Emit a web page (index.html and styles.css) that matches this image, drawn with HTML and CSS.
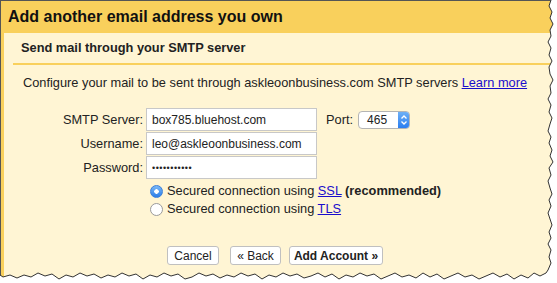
FILE: index.html
```html
<!DOCTYPE html>
<html lang="en">
<head>
    <meta charset="UTF-8">
    <meta name="viewport" content="width=device-width, initial-scale=1.0">
    <title>Add another email address you own</title>
    <link rel="stylesheet" href="styles.css">
</head>
<body>
    <div class="page">
        <div class="dialog">
            <div class="header">Add another email address you own</div>
            <div class="content">
                <div class="section-title">Send mail through your SMTP server</div>
                <div class="divider"></div>
                <p class="intro">Configure your mail to be sent through askleoonbusiness.com SMTP servers <a href="#">Learn more</a></p>

                <div class="form">
                    <label class="label">SMTP Server:</label>
                    <div class="field-row">
                        <input class="text" type="text" value="box785.bluehost.com">
                        <span class="port-label">Port:</span>
                        <div class="select">
                            <span class="select-value">465</span>
                            <span class="select-arrows">
                                <svg width="8" height="12" viewBox="0 0 8 12">
                                    <path d="M1.5 4.5 L4 2 L6.5 4.5 M1.5 7.5 L4 10 L6.5 7.5" fill="none" stroke="#fff" stroke-width="1.3"/>
                                </svg>
                            </span>
                        </div>
                    </div>
                    <label class="label">Username:</label>
                    <div class="field-row">
                        <input class="text" type="text" value="leo@askleoonbusiness.com">
                    </div>
                    <label class="label">Password:</label>
                    <div class="field-row">
                        <input class="text password" type="password" value="leopassword">
                    </div>
                </div>

                <div class="options">
                    <div class="option">
                        <span class="radio checked"></span>
                        <span>Secured connection using <a href="#">SSL</a> <b>(recommended)</b></span>
                    </div>
                    <div class="option">
                        <span class="radio"></span>
                        <span>Secured connection using <a href="#">TLS</a></span>
                    </div>
                </div>

                <div class="buttons">
                    <button class="btn cancel">Cancel</button>
                    <button class="btn back">&laquo; Back</button>
                    <button class="btn primary">Add Account &raquo;</button>
                </div>
            </div>
        </div>

        <svg class="torn" width="557" height="283" viewBox="0 0 557 283">
            <path class="torn-fill" d="M557 0 L551 0 L549 6 L552 12 L550 18 L553 24 L550 30 L551 36 L548 42 L551 48 L549 55 L552 61 L549 67 L550 74 L553 80 L550 86 L551 93 L548 99 L551 105 L549 112 L552 118 L550 124 L548 131 L551 137 L549 143 L552 150 L550 156 L553 162 L549 168 L551 175 L548 181 L550 188 L552 194 L549 200 L551 206 L548 213 L550 219 L552 225 L549 232 L551 238 L548 244 L551 250 L549 257 L551 263 L548 270 L546 273 L540 276 L534 273 L528 278 L521 275 L514 279 L507 274 L500 277 L493 273 L486 276 L479 279 L472 275 L465 277 L458 273 L451 276 L444 279 L437 274 L430 277 L423 273 L416 278 L409 275 L402 277 L395 273 L388 276 L381 279 L374 274 L367 276 L360 273 L353 277 L346 275 L339 279 L332 274 L325 277 L318 273 L311 276 L304 278 L297 274 L290 276 L283 273 L276 277 L269 275 L262 279 L255 274 L248 276 L241 273 L234 277 L227 275 L220 278 L213 274 L206 276 L199 273 L192 277 L185 279 L178 274 L171 276 L164 273 L157 277 L150 275 L143 279 L136 274 L129 276 L122 273 L115 277 L108 275 L101 278 L94 274 L87 276 L80 273 L73 277 L66 275 L59 279 L52 274 L45 276 L38 273 L31 277 L24 275 L17 278 L10 275 L3 277 L0 275 L0 283 L557 283 Z"/>
            <path class="torn-line" d="M551 0 L549 6 L552 12 L550 18 L553 24 L550 30 L551 36 L548 42 L551 48 L549 55 L552 61 L549 67 L550 74 L553 80 L550 86 L551 93 L548 99 L551 105 L549 112 L552 118 L550 124 L548 131 L551 137 L549 143 L552 150 L550 156 L553 162 L549 168 L551 175 L548 181 L550 188 L552 194 L549 200 L551 206 L548 213 L550 219 L552 225 L549 232 L551 238 L548 244 L551 250 L549 257 L551 263 L548 270 L546 273 L540 276 L534 273 L528 278 L521 275 L514 279 L507 274 L500 277 L493 273 L486 276 L479 279 L472 275 L465 277 L458 273 L451 276 L444 279 L437 274 L430 277 L423 273 L416 278 L409 275 L402 277 L395 273 L388 276 L381 279 L374 274 L367 276 L360 273 L353 277 L346 275 L339 279 L332 274 L325 277 L318 273 L311 276 L304 278 L297 274 L290 276 L283 273 L276 277 L269 275 L262 279 L255 274 L248 276 L241 273 L234 277 L227 275 L220 278 L213 274 L206 276 L199 273 L192 277 L185 279 L178 274 L171 276 L164 273 L157 277 L150 275 L143 279 L136 274 L129 276 L122 273 L115 277 L108 275 L101 278 L94 274 L87 276 L80 273 L73 277 L66 275 L59 279 L52 274 L45 276 L38 273 L31 277 L24 275 L17 278 L10 275 L3 277 L0 275"/>
        </svg>
    </div>
</body>
</html>
```

FILE: styles.css
```css
body {
    margin: 0;
    background: #fff;
    font-family: "Liberation Sans", Arial, sans-serif;
    font-size: 12.8px;
    color: #222;
}
.page {
    position: relative;
    width: 557px;
    height: 283px;
    overflow: hidden;
}
.dialog {
    width: 556px;
    height: 290px;
    border-top: 1px solid #555;
    border-left: 1px solid #555;
}
.header {
    height: 32px;
    line-height: 32px;
    padding-left: 7px;
    background: #f9d05c;
    font-size: 16px;
    font-weight: bold;
    color: #111;
}
.content {
    height: 257px;
    background: #fff5d4;
    border-left: 3px solid #f9d05c;
    padding-top: 7px;
}
.section-title {
    padding-left: 17px;
    line-height: 16px;
    font-weight: bold;
}
.divider {
    height: 2px;
    margin: 7px 0 0 9px;
    background: #f9d05c;
}
.intro {
    margin: 10px 0 0 19px;
    line-height: 16px;
}
a {
    color: #1a0dcc;
}
.form {
    display: grid;
    grid-template-columns: 120px auto;
    column-gap: 3px;
    row-gap: 1px;
    margin: 17px 0 0 19px;
    align-items: center;
}
.label {
    text-align: right;
    line-height: 22px;
}
.field-row {
    display: flex;
    align-items: center;
}
.text {
    box-sizing: border-box;
    width: 171px;
    height: 23px;
    margin: 0;
    padding: 0 5px;
    border: 1px solid #c8c8c8;
    background: #fff;
    font-family: "Liberation Sans", Arial, sans-serif;
    font-size: 12px;
    color: #222;
}
.text.password {
    font-size: 9px;
    letter-spacing: 0.5px;
}
.port-label {
    margin-left: 9px;
    margin-right: 5px;
}
.select {
    display: flex;
    box-sizing: border-box;
    width: 52px;
    height: 18px;
    border: 1px solid #b4b4b4;
    border-radius: 4px;
    background: #fff;
    overflow: hidden;
}
.select-value {
    flex: 1;
    padding-left: 8px;
    line-height: 16px;
    font-size: 12px;
}
.select-arrows {
    display: flex;
    align-items: center;
    justify-content: center;
    width: 11px;
    background: linear-gradient(#6eb0f5, #2b7ef0);
}
.options {
    margin: 3px 0 0 146px;
}
.option {
    display: flex;
    align-items: center;
    line-height: 18px;
}
.radio {
    box-sizing: border-box;
    width: 13px;
    height: 13px;
    margin-right: 4px;
    border: 1px solid #9a9a9a;
    border-radius: 50%;
    background: #fff;
}
.radio.checked {
    border-color: #3b7fd9;
    background: radial-gradient(circle, #fff 0 2px, transparent 2.5px), linear-gradient(#7ab8f7, #2c7ee8);
}
.buttons {
    display: flex;
    gap: 8px;
    margin-top: 28px;
    padding-left: 163px;
}
.btn {
    box-sizing: border-box;
    height: 19px;
    margin: 0;
    padding: 0;
    border: 1px solid #c0c0c0;
    border-radius: 3px;
    background: #fff;
    font-family: "Liberation Sans", Arial, sans-serif;
    font-size: 12px;
    color: #222;
}
.btn.cancel {
    width: 52px;
    margin-right: 3px;
}
.btn.back {
    width: 51px;
}
.btn.primary {
    width: 94px;
    font-weight: bold;
}
.torn {
    position: absolute;
    left: 0;
    top: 0;
}
.torn-fill {
    fill: #fff;
}
.torn-line {
    fill: none;
    stroke: #333;
    stroke-width: 1;
}
```
